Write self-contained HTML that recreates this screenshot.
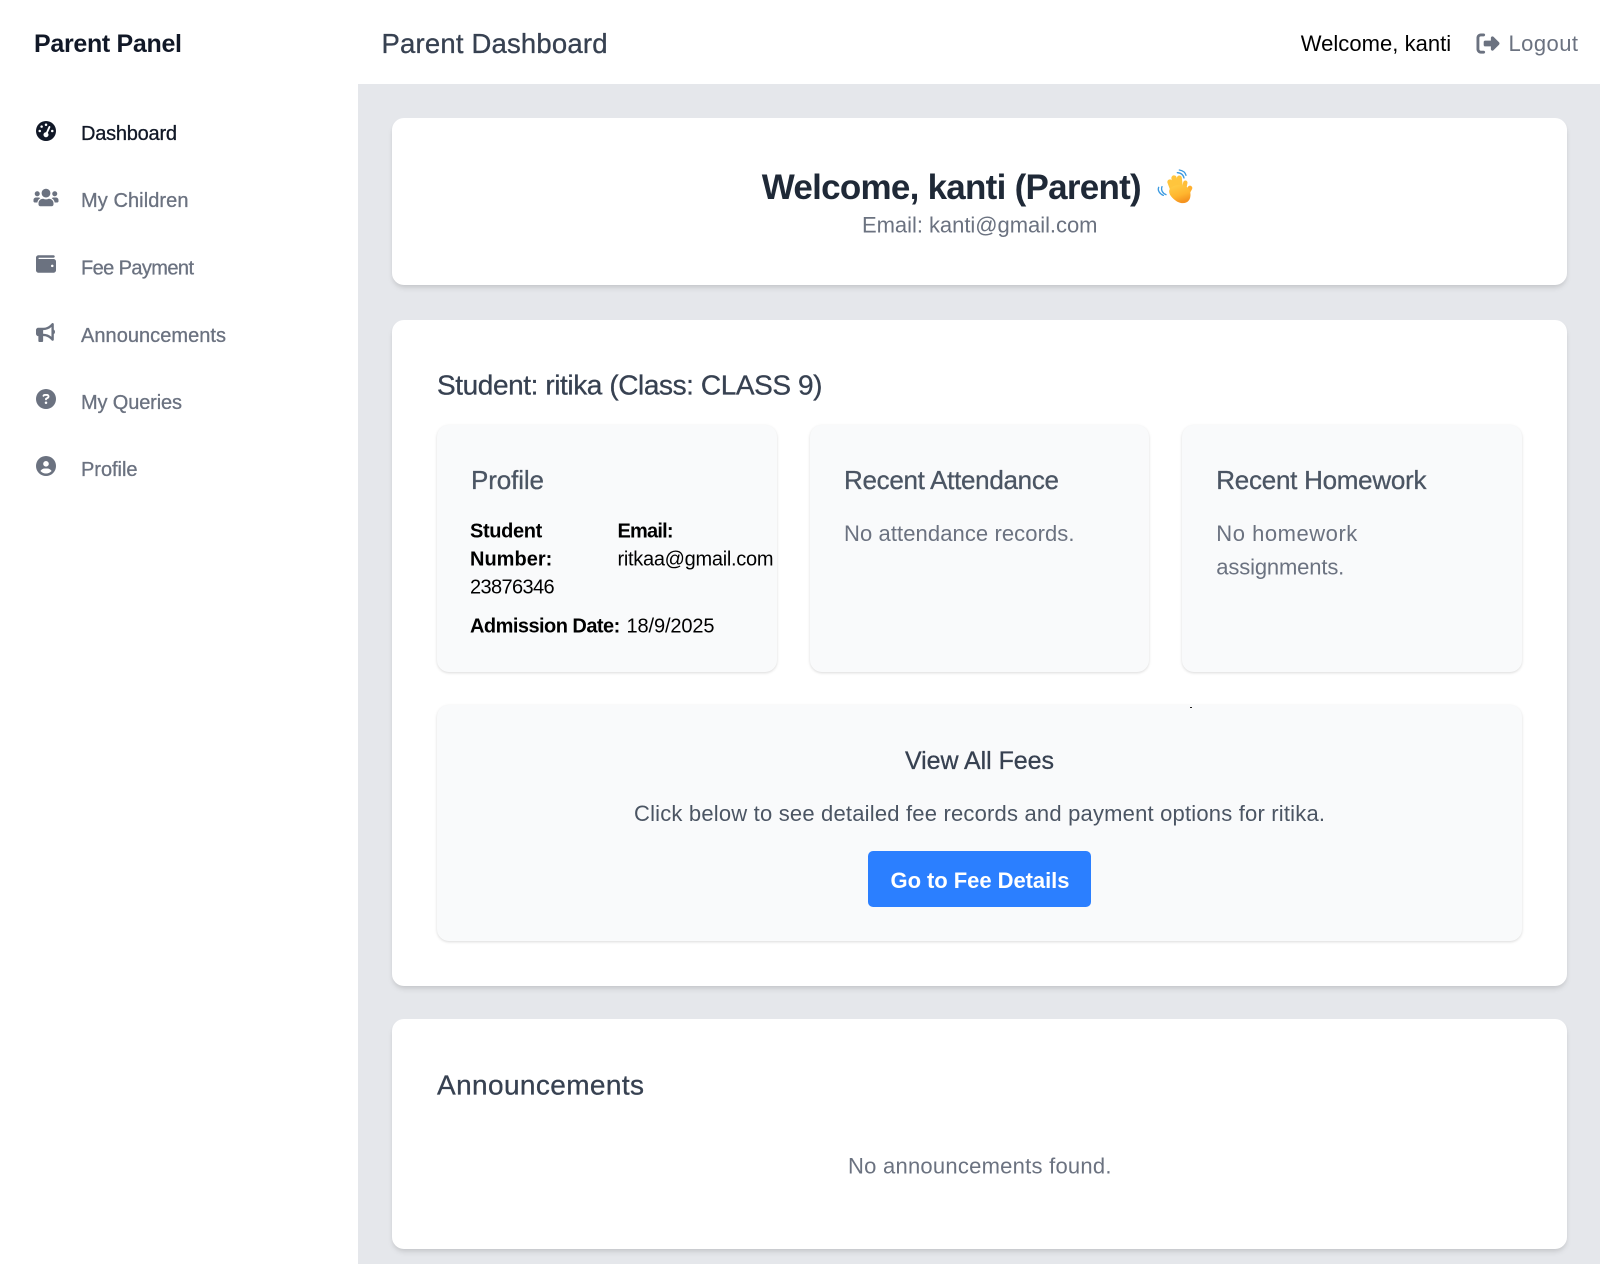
<!DOCTYPE html>
<html lang="en">
<head>
<meta charset="utf-8">
<title>Parent Dashboard</title>
<style>
html,body{margin:0;padding:0;width:1600px;height:1264px;overflow:hidden;background:#e5e7eb}
.box{position:absolute;box-sizing:border-box}
.side{left:0;top:0;width:358px;height:1264px;background:#fff}
.top{left:358px;top:0;width:1242px;height:84px;background:#fff}
.card{background:#fff;border-radius:12px;box-shadow:0 4px 6px -1px rgba(0,0,0,.1),0 2px 4px -1px rgba(0,0,0,.06)}
.sub{background:#f9fafb;border-radius:12px;box-shadow:0 1px 3px rgba(0,0,0,.1),0 1px 2px rgba(0,0,0,.05)}
.btn{left:868px;top:851px;width:223px;height:56px;background:#2b7fff;border-radius:5px}
.dot{left:1190px;top:707px;width:2px;height:1px;background:#222}
svg{position:absolute;left:0;top:0}
text{font-family:"Liberation Sans",sans-serif;white-space:pre}
.m{stroke-width:.3px}
</style>
</head>
<body>
<div class="box side"></div>
<div class="box top"></div>
<div class="box card" style="left:392px;top:118px;width:1175px;height:167px"></div>
<div class="box card" style="left:392px;top:319.5px;width:1175px;height:666px"></div>
<div class="box card" style="left:392px;top:1019px;width:1175px;height:230px"></div>
<div class="box sub" style="left:437px;top:425px;width:340px;height:247px"></div>
<div class="box sub" style="left:810px;top:425px;width:339px;height:247px"></div>
<div class="box sub" style="left:1182px;top:425px;width:340px;height:247px"></div>
<div class="box sub" style="left:437px;top:705px;width:1085px;height:236px"></div>
<div class="box btn"></div>
<div class="box dot"></div>
<svg width="1600" height="1264" viewBox="0 0 1600 1264" xmlns="http://www.w3.org/2000/svg">
<!-- sidebar -->
<text x="34" y="52" font-size="25" font-weight="700" fill="#111827" textLength="148">Parent Panel</text>
<svg x="36" y="121" width="20" height="20" viewBox="0 0 512 512"><path fill="#111827" d="M0 256a256 256 0 1 1 512 0A256 256 0 1 1 0 256zM288 96a32 32 0 1 0 -64 0 32 32 0 1 0 64 0zM256 416c35.3 0 64-28.7 64-64c0-17.4-6.9-33.1-18.1-44.6L366 161.7c5.3-12.1-.2-26.3-12.3-31.6s-26.3 .2-31.6 12.3L257.9 288c-.6 0-1.3 0-1.9 0c-35.3 0-64 28.7-64 64s28.7 64 64 64zM176 144a32 32 0 1 0 -64 0 32 32 0 1 0 64 0zM96 288a32 32 0 1 0 0-64 32 32 0 1 0 0 64zm352-32a32 32 0 1 0 -64 0 32 32 0 1 0 64 0z"/></svg>
<svg x="33.5" y="187.5" width="25" height="20" viewBox="0 0 640 512"><path fill="#6b7280" d="M96 224c35.3 0 64-28.7 64-64s-28.7-64-64-64-64 28.7-64 64 28.7 64 64 64zm448 0c35.3 0 64-28.7 64-64s-28.7-64-64-64-64 28.7-64 64 28.7 64 64 64zm32 32h-64c-17.6 0-33.5 7.1-45.1 18.6 40.3 22.1 68.9 62 75.1 109.4h66c17.7 0 32-14.3 32-32v-32c0-35.3-28.7-64-64-64zm-256 0c61.9 0 112-50.1 112-112S381.9 32 320 32 208 82.1 208 144s50.1 112 112 112zm76.8 32h-8.3c-20.8 10-43.9 16-68.5 16s-47.6-6-68.5-16h-8.3C179.6 288 128 339.6 128 403.2V432c0 26.5 21.5 48 48 48h288c26.5 0 48-21.5 48-48v-28.8c0-63.6-51.6-115.2-115.2-115.2zm-223.7-13.4C161.5 263.1 145.6 256 128 256H64c-35.3 0-64 28.7-64 64v32c0 17.7 14.3 32 32 32h65.9c6.3-47.4 34.9-87.3 75.2-109.4z"/></svg>
<svg x="36" y="254" width="20" height="20" viewBox="0 0 512 512"><path fill="#6b7280" d="M64 32C28.7 32 0 60.7 0 96V416c0 35.3 28.7 64 64 64H448c35.3 0 64-28.7 64-64V192c0-35.3-28.7-64-64-64H80c-8.8 0-16-7.2-16-16s7.2-16 16-16H448c17.7 0 32-14.3 32-32s-14.3-32-32-32H64zM416 272a32 32 0 1 1 0 64 32 32 0 1 1 0-64z"/></svg>
<svg x="36" y="323" width="19" height="19" viewBox="0 0 512 512"><path fill="#6b7280" d="M480 32c0-12.9-7.8-24.6-19.8-29.6s-25.7-2.2-34.9 6.9L381.7 53c-48 48-113.1 75-181 75H192 160 64c-35.3 0-64 28.7-64 64v96c0 35.3 28.7 64 64 64l0 128c0 17.7 14.3 32 32 32h64c17.7 0 32-14.3 32-32V352l8.7 0c67.9 0 133 27 181 75l43.6 43.6c9.2 9.2 22.9 11.9 34.9 6.9s19.8-16.6 19.8-29.6V300.4c18.6-8.8 32-32.5 32-60.4s-13.4-51.6-32-60.4V32zm-64 76.7V240 371.3C357.2 317.8 280.5 288 200.7 288H192V192h8.7c79.8 0 156.5-29.8 215.3-83.3z"/></svg>
<svg x="36" y="389" width="20" height="20" viewBox="0 0 512 512"><path fill="#6b7280" d="M256 512A256 256 0 1 0 256 0a256 256 0 1 0 0 512zM169.8 165.3c7.9-22.3 29.1-37.3 52.8-37.3h58.3c34.9 0 63.1 28.3 63.1 63.1c0 22.6-12.1 43.5-31.7 54.8L280 264.4c-.2 13-10.9 23.6-24 23.6c-13.3 0-24-10.7-24-24V250.5c0-8.6 4.6-16.5 12.1-20.8l44.3-25.4c4.7-2.7 7.6-7.7 7.6-13.1c0-8.4-6.8-15.1-15.1-15.1H222.6c-3.4 0-6.4 2.1-7.5 5.3l-.4 1.2c-4.4 12.5-18.2 19-30.6 14.6s-19-18.2-14.6-30.6l.4-1.2zM224 352a32 32 0 1 1 64 0 32 32 0 1 1 -64 0z"/></svg>
<svg x="36" y="456" width="20" height="20" viewBox="0 0 512 512"><path fill="#6b7280" d="M399 384.2C376.9 345.8 335.4 320 288 320H224c-47.4 0-88.9 25.8-111 64.2c35.2 39.2 86.2 63.8 143 63.8s107.8-24.7 143-63.8zM0 256a256 256 0 1 1 512 0A256 256 0 1 1 0 256zm256 16a72 72 0 1 0 0-144 72 72 0 1 0 0 144z"/></svg>
<g font-size="20">
<text class="m" stroke="#111827" x="81" y="140" fill="#111827" textLength="96">Dashboard</text>
<text class="m" stroke="#6b7280" x="81" y="207" fill="#6b7280" textLength="107.5">My Children</text>
<text class="m" stroke="#6b7280" x="81" y="274.5" fill="#6b7280" textLength="113">Fee Payment</text>
<text class="m" stroke="#6b7280" x="81" y="342" fill="#6b7280" textLength="145">Announcements</text>
<text class="m" stroke="#6b7280" x="81" y="409" fill="#6b7280" textLength="101">My Queries</text>
<text class="m" stroke="#6b7280" x="81" y="476" fill="#6b7280" textLength="56.5">Profile</text>
</g>
<!-- header -->
<text class="m" stroke="#374151" x="381.5" y="53" font-size="27.5" fill="#374151" textLength="226">Parent Dashboard</text>
<text x="1300.7" y="51" font-size="22" fill="#000" textLength="150.5">Welcome, kanti</text>
<svg x="1476.5" y="32" width="23" height="23" viewBox="0 0 512 512"><path fill="#6b7280" d="M377.9 105.9L500.7 228.7c7.2 7.2 11.3 17.1 11.3 27.3s-4.1 20.1-11.3 27.3L377.9 406.1c-6.4 6.4-15 9.9-24 9.9c-18.7 0-33.9-15.2-33.9-33.9l0-62.1-128 0c-17.7 0-32-14.3-32-32l0-64c0-17.7 14.3-32 32-32l128 0 0-62.1c0-18.7 15.2-33.9 33.9-33.9c9 0 17.6 3.6 24 9.9zM160 96L96 96c-17.7 0-32 14.3-32 32l0 256c0 17.7 14.3 32 32 32l64 0c17.7 0 32 14.3 32 32s-14.3 32-32 32l-64 0c-53 0-96-43-96-96L0 128C0 75 43 32 96 32l64 0c17.7 0 32 14.3 32 32s-14.3 32-32 32z"/></svg>
<text x="1508.5" y="51" font-size="22" fill="#6b7280" textLength="69.5">Logout</text>
<!-- welcome -->
<text x="761.7" y="199" font-size="35" font-weight="700" fill="#1f2937" textLength="380">Welcome, kanti (Parent)</text>
<svg x="1150" y="162" width="50" height="50" viewBox="0 0 150 150">
<defs><linearGradient id="h" x1="0" y1="0" x2=".4" y2="1"><stop offset="0" stop-color="#ffcf48"/><stop offset=".65" stop-color="#ffb52e"/><stop offset="1" stop-color="#f59420"/></linearGradient></defs>
<g stroke-linecap="round" fill="none">
<path stroke="#ffc53d" stroke-width="16" d="M72 92 60 60"/>
<path stroke="#ffc53d" stroke-width="16" d="M82 84 72 48"/>
<path stroke="#ffc53d" stroke-width="15" d="M92 82 88 48"/>
<path stroke="#ffbe38" stroke-width="13" d="M102 84 106 62"/>
<path stroke="#ffb030" stroke-width="14" d="M108 100 120 78"/>
</g>
<path fill="url(#h)" d="M58 84C66 66 98 66 112 76c12 10 12 30 4 40-6 8-20 10-32 4C72 114 54 98 58 84z"/>
<g stroke="#3b9ae1" stroke-width="4" stroke-linecap="round" fill="none">
<path d="M82 32C92 32 100 38 102 48"/><path d="M88 24C100 26 106 32 108 40"/>
<path d="M36 74C32 84 38 94 48 98"/><path d="M26 76C22 86 30 96 40 100"/>
</g></svg>
<text x="862" y="232.5" font-size="22" fill="#6b7280" textLength="235.5">Email: kanti@gmail.com</text>
<!-- student -->
<text class="m" stroke="#374151" x="437" y="394.5" font-size="28" fill="#374151" textLength="385.5">Student: ritika (Class: CLASS 9)</text>
<text class="m" stroke="#4b5563" x="471" y="489" font-size="26" fill="#4b5563" textLength="73">Profile</text>
<g font-size="20" fill="#000">
<text x="470" y="537.3" font-weight="700" textLength="72.3">Student</text>
<text x="470" y="565.7" font-weight="700" textLength="82.3">Number:</text>
<text x="470" y="593.3" textLength="84.6">23876346</text>
<text x="617.5" y="537.3" font-weight="700" textLength="56">Email:</text>
<text x="617.5" y="565.7" textLength="156">ritkaa@gmail.com</text>
<text x="470" y="632.7" font-weight="700" textLength="150.3">Admission Date:</text>
<text x="626.5" y="632.7" textLength="88">18/9/2025</text>
</g>
<text class="m" stroke="#4b5563" x="844" y="489" font-size="26" fill="#4b5563" textLength="215">Recent Attendance</text>
<text x="844" y="541" font-size="22" fill="#6b7280" textLength="230.5">No attendance records.</text>
<text class="m" stroke="#4b5563" x="1216.3" y="489" font-size="26" fill="#4b5563" textLength="210.2">Recent Homework</text>
<text x="1216.3" y="541" font-size="22" fill="#6b7280" textLength="141">No homework</text>
<text x="1216.3" y="574.5" font-size="22" fill="#6b7280" textLength="128">assignments.</text>
<!-- fees -->
<text class="m" stroke="#374151" x="905" y="769" font-size="25" fill="#374151" textLength="149">View All Fees</text>
<text x="634" y="821" font-size="22" fill="#4b5563" textLength="691">Click below to see detailed fee records and payment options for ritika.</text>
<text x="890.5" y="888" font-size="22" font-weight="700" fill="#fff" textLength="179">Go to Fee Details</text>
<!-- announcements -->
<text class="m" stroke="#374151" x="437" y="1094.3" font-size="28" fill="#374151" textLength="207">Announcements</text>
<text x="848" y="1173.5" font-size="22" fill="#6b7280" textLength="263.5">No announcements found.</text>
</svg>
</body>
</html>
